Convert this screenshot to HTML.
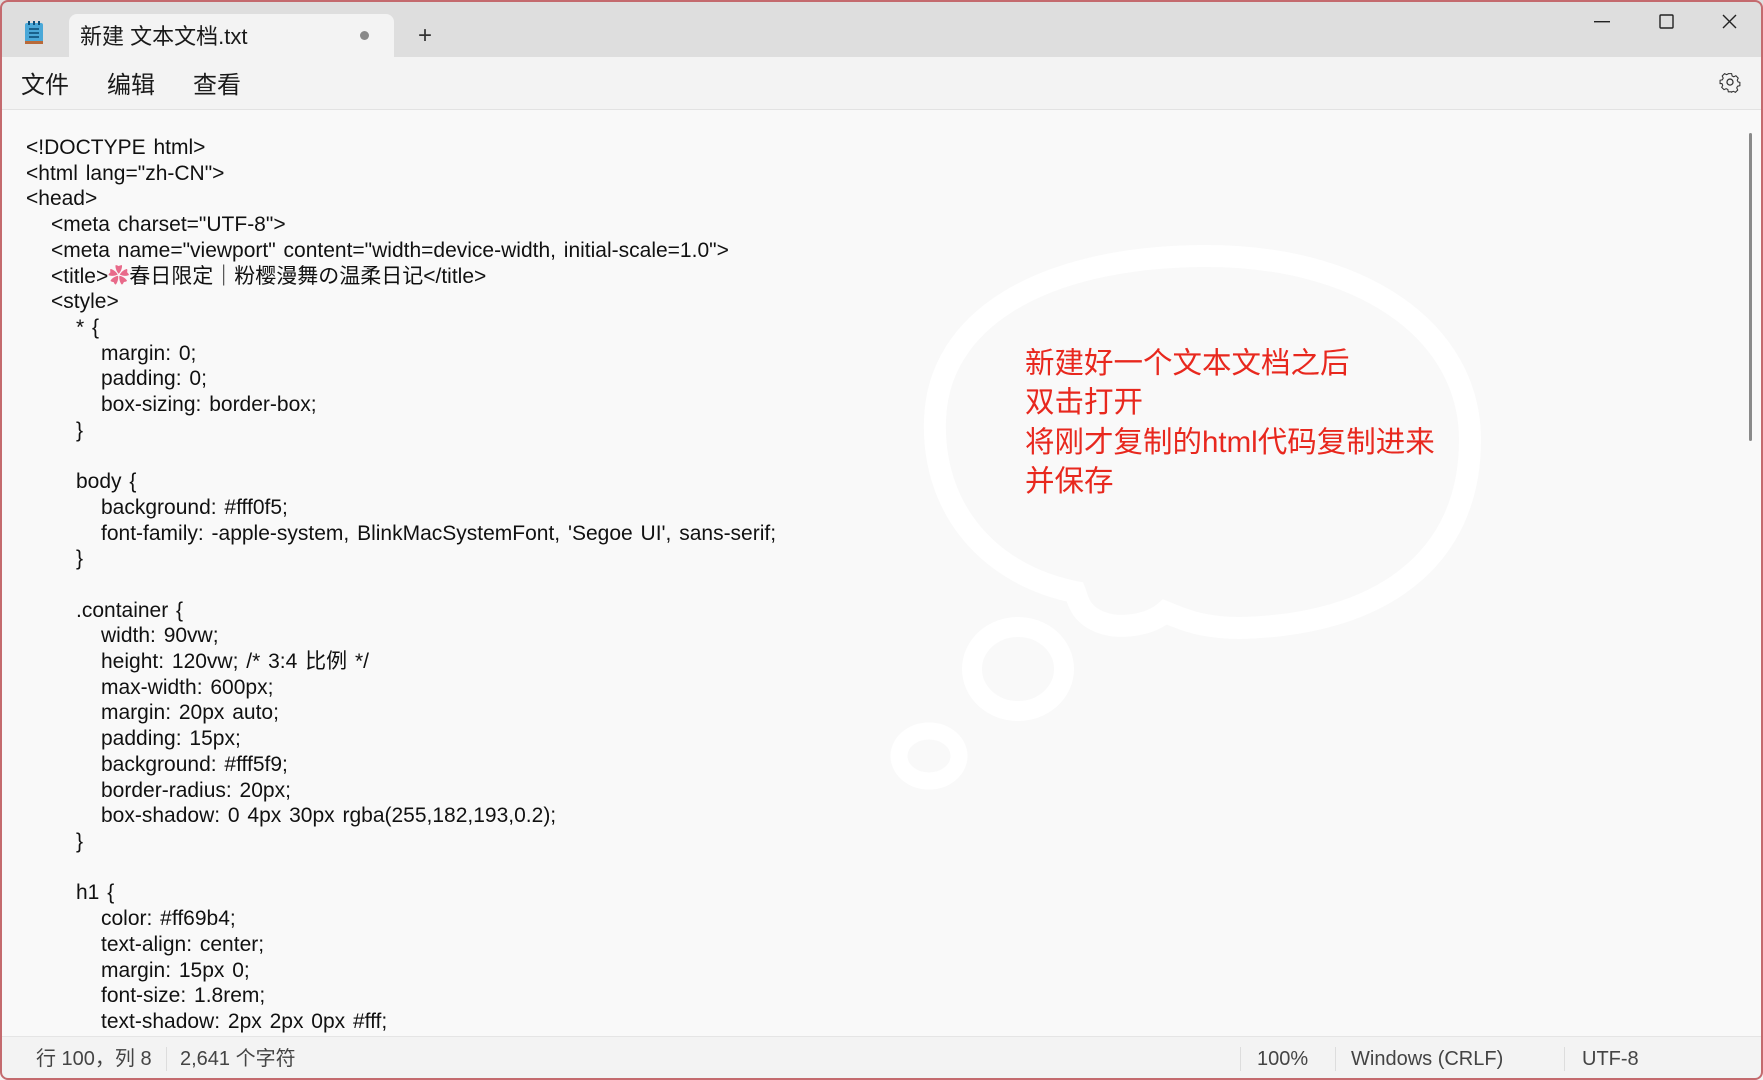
<!DOCTYPE html>
<html><head><meta charset="utf-8"><style>
*{margin:0;padding:0;box-sizing:border-box}
html,body{width:1763px;height:1080px;overflow:hidden;background:#f9f9f9;font-family:"Liberation Sans","Noto Sans CJK SC",sans-serif;color:#1a1a1a}
.frame{position:absolute;left:0;top:0;width:1763px;height:1080px;border:2px solid #c46a6e;border-radius:8px;pointer-events:none;z-index:10}
.titlebar{position:absolute;left:0;top:0;width:1763px;height:57px;background:#dedede}
.tab{position:absolute;left:69px;top:14px;width:325px;height:44px;background:#f3f3f3;border-radius:8px 8px 0 0}
.tab .t{position:absolute;left:11px;top:10px;font-size:22px;line-height:26px;color:#1a1a1a}
.tab .dot{position:absolute;left:291px;top:17px;width:9px;height:9px;border-radius:50%;background:#8a8a8a}
.plus{position:absolute;left:418px;top:24px;font-size:24px;color:#333;line-height:1}
.menubar{position:absolute;left:0;top:57px;width:1763px;height:53px;background:#f3f3f3;border-bottom:1px solid #e2e2e2}
.menubar span{position:absolute;top:15px;font-size:24px;line-height:28px;color:#1a1a1a}
.code{position:absolute;left:26px;top:135px;font-size:21px;line-height:25.7px;white-space:pre;tab-size:25px;-moz-tab-size:25px;word-spacing:2px;color:#111}
.status{position:absolute;left:0;top:1036px;width:1763px;height:44px;background:#f3f3f3;border-top:1px solid #e5e5e5;font-size:20px;color:#444}
.status span{position:absolute;top:10px;line-height:24px}
.sep{position:absolute;top:10px;width:1px;height:24px;background:#ddd}
.bt{position:absolute;font-size:29.5px;color:#e8281e;left:1025px;line-height:39.4px;top:344px;white-space:pre}
</style></head><body>
<div class="titlebar">
 <svg style="position:absolute;left:24px;top:20px" width="20" height="26" viewBox="0 0 20 26"><rect x="1" y="3" width="18" height="20" rx="2" fill="#4aa8d8"/><rect x="1" y="21" width="18" height="3" fill="#b86a3a"/><g stroke="#0d4f7a" stroke-width="1.6"><line x1="5" y1="9" x2="15" y2="9"/><line x1="5" y1="13" x2="15" y2="13"/><line x1="5" y1="17" x2="15" y2="17"/></g><g fill="#0d4f7a"><rect x="4" y="1" width="2" height="4"/><rect x="9" y="1" width="2" height="4"/><rect x="14" y="1" width="2" height="4"/></g></svg>
 <div class="tab"><span class="t">新建 文本文档.txt</span><div class="dot"></div></div>
 <div class="plus">+</div>
 <svg style="position:absolute;left:1594px;top:21px" width="16" height="2"><rect width="16" height="1.4" fill="#222"/></svg>
 <svg style="position:absolute;left:1659px;top:14px" width="15" height="15"><rect x="1" y="1" width="13" height="13" rx="1" fill="none" stroke="#222" stroke-width="1.4"/></svg>
 <svg style="position:absolute;left:1722px;top:14px" width="15" height="15"><path d="M1 1L14 14M14 1L1 14" stroke="#222" stroke-width="1.4"/></svg>
</div>
<div class="menubar"><span style="left:21px">文件</span><span style="left:107px">编辑</span><span style="left:193px">查看</span>
 <svg style="position:absolute;left:1719px;top:15px" width="22" height="22" viewBox="0 0 24 24"><path d="M10 2h4l.6 2.8 2 1 2.6-1.2 2.8 2.8-1.2 2.6 1 2 2.2.6v4l-2.8.6-1 2 1.2 2.6-2.8 2.8-2.6-1.2-2 1L14 24h-4l-.6-2.8-2-1-2.6 1.2-2.8-2.8 1.2-2.6-1-2L0 14v-4l2.8-.6 1-2-1.2-2.6 2.8-2.8 2.6 1.2 2-1z" transform="scale(.9) translate(1.3 0)" fill="none" stroke="#333" stroke-width="1.3"/><circle cx="12" cy="11" r="3.3" fill="none" stroke="#333" stroke-width="1.4"/></svg>
</div>
<div class="code">&lt;!DOCTYPE html&gt;
&lt;html lang="zh-CN"&gt;
&lt;head&gt;
	&lt;meta charset="UTF-8"&gt;
	&lt;meta name="viewport" content="width=device-width, initial-scale=1.0"&gt;
	&lt;title&gt;<span style="color:#e86a8a">✿</span>春日限定｜粉樱漫舞の温柔日记&lt;/title&gt;
	&lt;style&gt;
		* {
			margin: 0;
			padding: 0;
			box-sizing: border-box;
		}

		body {
			background: #fff0f5;
			font-family: -apple-system, BlinkMacSystemFont, 'Segoe UI', sans-serif;
		}

		.container {
			width: 90vw;
			height: 120vw; /* 3:4 比例 */
			max-width: 600px;
			margin: 20px auto;
			padding: 15px;
			background: #fff5f9;
			border-radius: 20px;
			box-shadow: 0 4px 30px rgba(255,182,193,0.2);
		}

		h1 {
			color: #ff69b4;
			text-align: center;
			margin: 15px 0;
			font-size: 1.8rem;
			text-shadow: 2px 2px 0px #fff;</div>
<svg style="position:absolute;left:0;top:0" width="1763" height="1080">
 <path d="M1075,592 C990,575 932,510 935,420 C938,320 1040,258 1200,256 C1360,254 1470,330 1470,440 C1470,560 1380,625 1240,628 C1200,628 1180,618 1165,612 C1150,625 1120,630 1100,622 C1080,614 1078,600 1075,592 Z" fill="none" stroke="#fff" stroke-width="22"/>
 <ellipse cx="1018" cy="669" rx="46" ry="42" fill="none" stroke="#fff" stroke-width="20"/>
 <ellipse cx="929" cy="756" rx="30" ry="25" fill="none" stroke="#fff" stroke-width="17"/>
 <rect x="1749" y="133" width="3" height="308" rx="1.5" fill="#8a8a8a"/>
</svg>
<div class="bt">新建好一个文本文档之后
双击打开
将刚才复制的html代码复制进来
并保存</div>
<div class="status">
 <span style="left:36px">行 100，列 8</span><div class="sep" style="left:166px"></div>
 <span style="left:180px">2,641 个字符</span>
 <div class="sep" style="left:1240px"></div><span style="left:1257px">100%</span>
 <div class="sep" style="left:1335px"></div><span style="left:1351px">Windows (CRLF)</span>
 <div class="sep" style="left:1564px"></div><span style="left:1582px">UTF-8</span>
</div>
<div class="frame"></div>
</body></html>
